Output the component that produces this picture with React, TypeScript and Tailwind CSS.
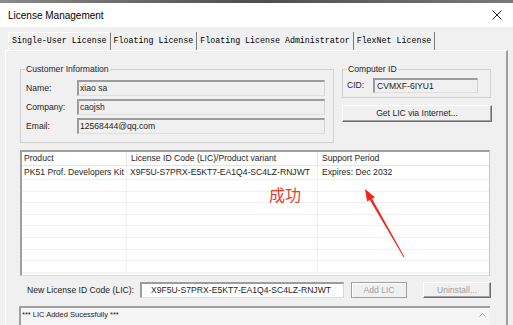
import React from 'react';

const sunken =
  'border-t-2 border-l-2 border-t-[#9c9c9c] border-l-[#9c9c9c] border-r border-b border-r-[#d4d4d4] border-b-[#dedede]';

const raised =
  'border border-t-white border-l-white border-r-[#6e6e6e] border-b-[#6e6e6e] shadow-[inset_-1px_-1px_0_#a0a0a0]';

const Field = ({ label, value }: { label: string; value: string }) => (
  <div className="flex items-center h-[16px]">
    <span className="w-[51px]">{label}</span>
    <div className={`w-[248px] h-[16px] flex items-center pl-[1px] bg-[#f0f0f0] ${sunken}`}>{value}</div>
  </div>
);

const Arrow = () => (
  <svg className="absolute left-0 top-0" width="470" height="126" viewBox="0 0 470 126">
    <polygon
      points="343,37 352.9,45.2 350.1,46.8 382.4,104.8 381.6,105.2 347.9,48 345.1,49.6"
      fill="#f2261b"
    />
  </svg>
);

const App: React.FC = () => {
  const tabs = ['Single-User License', 'Floating License', 'Floating License Administrator', 'FlexNet License'];
  const rows = Array.from({ length: 8 });

  return (
    <div className="w-[513px] h-[325px] overflow-hidden bg-[#f0f0f0] text-[#1e1e1e] font-['Liberation_Sans',Arial,sans-serif] text-[8.6px]">
      <div className="h-[3px] bg-gradient-to-r from-[#8a8a8a] via-[#4e4e4e] to-[#7a7a7a]" />
      <div className="h-[24px] bg-white flex items-center justify-between pl-[8px] pr-[11px]">
        <span className="text-[10px] text-black">License Management</span>
        <svg width="10" height="10" viewBox="0 0 10 10">
          <path d="M0.5 0.5 L9.5 9.5 M9.5 0.5 L0.5 9.5" stroke="#222" strokeWidth="1" />
        </svg>
      </div>

      <div className="pt-[5px] pl-[8px] flex h-[23px] font-['Liberation_Mono',monospace] text-[8.3px] text-black">
        {tabs.map((t, i) => (
          <div
            key={t}
            className={`h-[18px] flex items-center px-[3px] border-r border-r-[#7a7a7a] ${
              i === 0 ? 'border-l border-l-white border-t border-t-white pl-[3px]' : ''
            }`}
          >
            {t}
          </div>
        ))}
      </div>

      <div className="ml-[5px] w-[503px] h-[280px] border-t border-l border-white border-r-2 border-r-[#a0a0a0] pl-[14px] pt-[12px]">
        <div className="flex gap-[8px]">
          <fieldset className="w-[314px] h-[80px] border border-[#d0d0d0]">
            <legend className="ml-[4px] px-[1px] leading-[12px]">Customer Information</legend>
            <div className="pl-[5px] pt-[5px] flex flex-col gap-[3px]">
              <Field label="Name:" value="xiao sa" />
              <Field label="Company:" value="caojsh" />
              <Field label="Email:" value="12568444@qq.com" />
            </div>
          </fieldset>

          <div className="w-[150px] flex flex-col">
            <fieldset className="w-[149px] h-[35px] border border-[#d0d0d0]">
              <legend className="ml-[4px] px-[1px] leading-[12px]">Computer ID</legend>
              <div className="flex items-center pl-[4px] pt-[3px]">
                <span className="w-[26px]">CID:</span>
                <div className={`w-[105px] h-[15px] flex items-center pl-[2px] bg-[#f0f0f0] ${sunken}`}>
                  CVMXF-6IYU1
                </div>
              </div>
            </fieldset>
            <button className={`mt-[7px] w-[150px] h-[17px] bg-[#f0f0f0] flex items-center justify-center ${raised}`}>
              Get LIC via Internet...
            </button>
          </div>
        </div>

        <div className="relative mt-[7px] w-[470px] h-[126px] bg-white border-t-2 border-l-2 border-t-[#a0a0a0] border-l-[#a0a0a0] border-r border-b border-r-[#c8c8c8] border-b-[#dcdcdc] overflow-hidden">
          <div className="flex h-[14px] border-b border-[#e5e5e5]">
            <div className="w-[105px] pl-[2px] border-r border-[#e5e5e5] flex items-center">Product</div>
            <div className="w-[191px] pl-[4px] border-r border-[#e5e5e5] flex items-center">
              License ID Code (LIC)/Product variant
            </div>
            <div className="flex-1 pl-[4px] flex items-center">Support Period</div>
          </div>
          <div className="flex h-[14px] border-b border-[#f0f0f0]">
            <div className="w-[105px] pl-[2px] border-r border-[#f0f0f0] flex items-center whitespace-nowrap overflow-hidden">
              PK51 Prof. Developers Kit
            </div>
            <div className="w-[191px] pl-[3px] border-r border-[#f0f0f0] flex items-center whitespace-nowrap">
              X9F5U-S7PRX-E5KT7-EA1Q4-SC4LZ-RNJWT
            </div>
            <div className="flex-1 pl-[4px] flex items-center">Expires: Dec 2032</div>
          </div>
          {rows.map((_, i) => (
            <div key={i} className="flex h-[11.6px] border-b border-[#f0f0f0]">
              <div className="w-[105px] border-r border-[#f0f0f0]" />
              <div className="w-[191px] border-r border-[#f0f0f0]" />
              <div className="flex-1" />
            </div>
          ))}
          <span className="absolute left-[247px] top-[34px] text-[16px] leading-none text-[#f0382b] font-['Noto_Sans_CJK_SC',sans-serif]">
            成功
          </span>
          <Arrow />
        </div>

        <div className="mt-[6px] flex items-center h-[16px]">
          <span className="w-[120px] pl-[7px]">New License ID Code (LIC):</span>
          <div className={`w-[204px] h-[16px] bg-white flex items-center pl-[9px] ${sunken}`}>
            X9F5U-S7PRX-E5KT7-EA1Q4-SC4LZ-RNJWT
          </div>
          <button className="ml-[7px] w-[56px] h-[16px] bg-[#f0f0f0] border border-[#a0a0a0] shadow-[inset_1px_1px_0_white] text-[#a0a0a0] flex items-center justify-center">
            Add LIC
          </button>
          <button className={`ml-[16px] w-[68px] h-[16px] bg-[#f0f0f0] text-[#a0a0a0] flex items-center justify-center ${raised}`}>
            Uninstall...
          </button>
        </div>

        <div className="mt-[8px] -ml-[1px] w-[471px] h-[30px] bg-[#f5f5f5] border-t-2 border-l-2 border-[#a0a0a0] flex">
          <div className="flex-1 pl-[1px] pt-[1px] text-[7.5px]">*** LIC Added Sucessfully ***</div>
          <div className="w-[16px] flex justify-center pt-[5px]">
            <svg width="7" height="4" viewBox="0 0 7 4">
              <path d="M0.5 3.5 L3.5 0.5 L6.5 3.5" stroke="#a0a0a0" fill="none" strokeWidth="1" />
            </svg>
          </div>
        </div>
      </div>
    </div>
  );
};

export default App;
